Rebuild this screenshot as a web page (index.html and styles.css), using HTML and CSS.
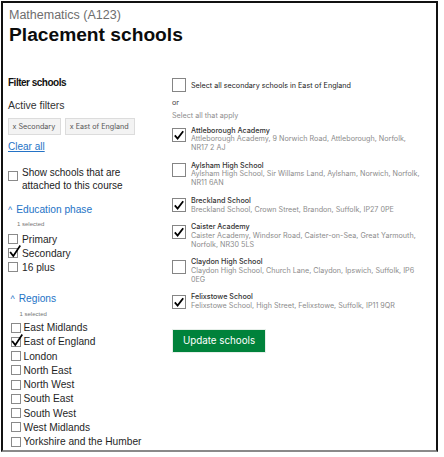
FILE: index.html
```html
<!DOCTYPE html>
<html lang="en">
<head>
<meta charset="utf-8">
<title>Placement schools</title>
<link rel="stylesheet" href="styles.css">
</head>
<body>
<div class="frame">
  <header class="page-head">
    <p class="caption">Mathematics (A123)</p>
    <h1 class="title">Placement schools</h1>
  </header>
  <div class="layout">
    <aside class="filters">
      <h2 class="filters-title">Filter schools</h2>
      <h3 class="active-title">Active filters</h3>
      <div class="tags">
        <span class="tag">x Secondary</span>
        <span class="tag">x East of England</span>
      </div>
      <a class="clear" href="#">Clear all</a>
      <label class="opt opt-attached"><span class="box"></span><span class="opt-attached-text">Show schools that are attached to this course</span></label>

      <section class="facet facet-phase">
        <div class="facet-toggle"><span class="caret">^</span><span>Education phase</span></div>
        <p class="facet-count">1 selected</p>
        <ul class="opts">
          <li class="opt"><span class="box"></span>Primary</li>
          <li class="opt"><span class="box checked"><svg class="tick" viewBox="0 0 12 13"><path d="M1.6 7.6 L4.3 11 L10.8 1.2"/></svg></span>Secondary</li>
          <li class="opt"><span class="box"></span>16 plus</li>
        </ul>
      </section>

      <section class="facet facet-regions">
        <div class="facet-toggle"><span class="caret">^</span><span>Regions</span></div>
        <p class="facet-count">1 selected</p>
        <ul class="opts opts-regions">
          <li class="opt"><span class="box"></span>East Midlands</li>
          <li class="opt"><span class="box checked"><svg class="tick" viewBox="0 0 12 13"><path d="M1.6 7.6 L4.3 11 L10.8 1.2"/></svg></span>East of England</li>
          <li class="opt"><span class="box"></span>London</li>
          <li class="opt"><span class="box"></span>North East</li>
          <li class="opt"><span class="box"></span>North West</li>
          <li class="opt"><span class="box"></span>South East</li>
          <li class="opt"><span class="box"></span>South West</li>
          <li class="opt"><span class="box"></span>West Midlands</li>
          <li class="opt"><span class="box"></span>Yorkshire and the Humber</li>
        </ul>
      </section>
    </aside>

    <main class="schools">
      <label class="select-all"><span class="cb"></span><span>Select all secondary schools in East of England</span></label>
      <p class="or">or</p>
      <p class="hint">Select all that apply</p>
      <ul class="school-list">
        <li class="school">
          <span class="cb"><svg class="cb-tick" viewBox="0 0 14 14"><path d="M2.8 7.4 L5.6 10.6 L11.2 3.2"/></svg></span>
          <div class="school-text"><p class="school-name">Attleborough Academy</p><p class="school-addr">Attleborough Academy, 9 Norwich Road, Attleborough, Norfolk, NR17 2 AJ</p></div>
        </li>
        <li class="school">
          <span class="cb"></span>
          <div class="school-text"><p class="school-name">Aylsham High School</p><p class="school-addr">Aylsham High School, Sir Willams Land, Aylsham, Norwich, Norfolk, NR11 6AN</p></div>
        </li>
        <li class="school">
          <span class="cb"><svg class="cb-tick" viewBox="0 0 14 14"><path d="M2.8 7.4 L5.6 10.6 L11.2 3.2"/></svg></span>
          <div class="school-text"><p class="school-name">Breckland School</p><p class="school-addr">Breckland School, Crown Street, Brandon, Suffolk, IP27 0PE</p></div>
        </li>
        <li class="school">
          <span class="cb"><svg class="cb-tick" viewBox="0 0 14 14"><path d="M2.8 7.4 L5.6 10.6 L11.2 3.2"/></svg></span>
          <div class="school-text"><p class="school-name">Caister Academy</p><p class="school-addr">Caister Academy, Windsor Road, Caister-on-Sea, Great Yarmouth, Norfolk, NR30 5LS</p></div>
        </li>
        <li class="school">
          <span class="cb"></span>
          <div class="school-text"><p class="school-name">Claydon High School</p><p class="school-addr">Claydon High School, Church Lane, Claydon, Ipswich, Suffolk, IP6 0EG</p></div>
        </li>
        <li class="school">
          <span class="cb"><svg class="cb-tick" viewBox="0 0 14 14"><path d="M2.8 7.4 L5.6 10.6 L11.2 3.2"/></svg></span>
          <div class="school-text"><p class="school-name">Felixstowe School</p><p class="school-addr">Felixstowe School, High Street, Felixstowe, Suffolk, IP11 9QR</p></div>
        </li>
      </ul>
      <button class="update" type="button">Update schools</button>
    </main>
  </div>
</div>
</body>
</html>
```

FILE: styles.css
```css
* { box-sizing: border-box; }
html, body { margin: 0; padding: 0; background: #fff; }
body { font-family: "Liberation Sans", Arial, sans-serif; color: #1f1f1f; }
p, h1, h2, h3, ul { margin: 0; padding: 0; }
ul { list-style: none; }

.frame {
  margin: 1px 0 0 1px;
  width: 437px;
  height: 451px;
  border: 2px solid #111;
  border-bottom-color: #8a8a8a;
  overflow: hidden;
}

.page-head { padding: 5px 0 0 6px; }
.caption { font-size: 12.5px; line-height: 14px; color: #6e6e6e; }
.title { margin-top: 2px; font-size: 19.2px; line-height: 22px; font-weight: 700; color: #0b0c0c; }

.layout {
  display: grid;
  grid-template-columns: 159px 1fr;
  column-gap: 5px;
  margin-top: 30px;
  padding-left: 5px;
}

/* left filters */
.filters { font-size: 10.2px; color: #1f1f1f; }
.filters-title { font-size: 10px; line-height: 14px; font-weight: 700; letter-spacing: -0.5px; color: #111; }
.active-title { margin-top: 8px; font-size: 10.5px; line-height: 14px; font-weight: 400; color: #333; }
.tags { display: flex; gap: 4px; margin-top: 6px; }
.tag {
  display: inline-flex; align-items: center;
  height: 17px; padding: 0 5px 0 3.5px;
  background: #f3f3f3; border: 1px solid #dcdcdc;
  font-family: "Inter", sans-serif; font-size: 7.2px; color: #555;
}
.clear { display: block; margin-top: 5px; font-size: 10px; line-height: 14px; color: #2473c6; text-decoration: underline; width: max-content; }

.opt { display: flex; align-items: center; gap: 4px; }
.box { position: relative; flex: none; width: 10px; height: 10px; border: 1px solid #8a8a8a; background: #fff; }
.tick { position: absolute; left: -0.5px; top: -4px; width: 12px; height: 13px; overflow: visible; }
.tick path { fill: none; stroke: #000; stroke-width: 1.7; stroke-linecap: square; stroke-linejoin: miter; }

.opt-attached { align-items: flex-start; margin-top: 13px; font-size: 10px; line-height: 12.5px; color: #222; }
.opt-attached .box { margin-top: 3.5px; }
.opt-attached-text { max-width: 112px; }

.facet-toggle { display: flex; gap: 4px; font-size: 10.2px; line-height: 14px; color: #2473c6; }
.caret { font-size: 9px; }
.facet-count { font-size: 6px; line-height: 8px; color: #777; padding-left: 9px; margin-top: 3px; }
.facet-phase { margin-top: 11px; }
.facet-phase .opts { margin-top: 4.3px; }
.facet-phase .opt { height: 14px; }
.facet-regions { margin-top: 18px; padding-left: 2.5px; }
.facet-regions .facet-count { margin-top: 3.7px; }
.opts-regions { margin-top: 2.6px; }
.opts-regions .opt { height: 14.25px; gap: 3px; }

/* right schools */
.schools { font-family: "Inter", sans-serif; font-size: 7.2px; color: #222; padding-right: 12px; }
.cb { position: relative; flex: none; width: 14px; height: 14px; border: 1px solid #858585; background: #fff; }
.cb-tick { position: absolute; left: -1px; top: -1px; width: 14px; height: 14px; }
.cb-tick path { fill: none; stroke: #000; stroke-width: 1.8; }
.select-all { display: flex; align-items: center; gap: 5px; margin-top: 2px; }
.or { margin-top: 5.6px; line-height: 10px; color: #444; }
.hint { margin-top: 3.7px; line-height: 10px; color: #8c8c8c; }
.school-list { margin-top: 5.3px; display: flex; flex-direction: column; gap: 9px; }
.school { display: flex; gap: 5px; align-items: flex-start; }
.school .cb { margin-top: 1.7px; }
.school-text { line-height: 8.7px; }
.school-name { font-weight: 500; color: #333; }
.school-addr { color: #8c8c8c; }

.update {
  display: block;
  margin-top: 17.7px;
  width: 94px; height: 24px;
  border: 1px solid #e6efe9;
  background: #00823b;
  color: #fff;
  font-family: "Inter", sans-serif;
  font-size: 9.8px;
  padding: 0;
  cursor: pointer;
}
```
